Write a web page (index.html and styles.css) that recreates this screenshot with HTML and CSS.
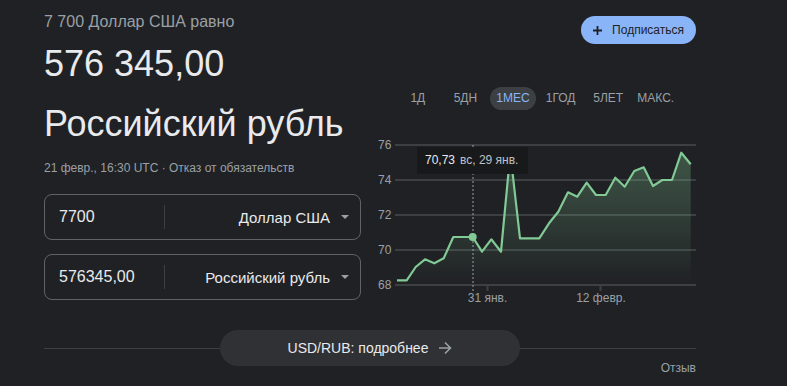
FILE: index.html
```html
<!DOCTYPE html>
<html lang="ru">
<head>
<meta charset="utf-8">
<title>USD to RUB</title>
<link rel="stylesheet" href="styles.css">
</head>
<body>
<div class="page">
  <div class="top">
    <div class="left">
      <div class="eq">7 700 Доллар США равно</div>
      <div class="big">576 345,00</div>
      <div class="big cur">Российский рубль</div>
      <div class="meta">21 февр., 16:30 UTC · <span class="disc">Отказ от обязательств</span></div>
      <div class="field">
        <div class="amount">7700</div>
        <div class="sep"></div>
        <div class="select">Доллар США<span class="caret"></span></div>
      </div>
      <div class="field">
        <div class="amount">576345,00</div>
        <div class="sep"></div>
        <div class="select">Российский рубль<span class="caret"></span></div>
      </div>
    </div>
    <div class="right">
      <div class="subrow">
        <button class="sub"><svg class="plus" width="9" height="9" viewBox="0 0 9 9"><path d="M4.5 0v9M0 4.5h9" stroke="#202124" stroke-width="1.8" fill="none"/></svg>Подписаться</button>
      </div>
      <div class="tabs">
        <span class="tab">1Д</span>
        <span class="tab">5ДН</span>
        <span class="tab on">1МЕС</span>
        <span class="tab">1ГОД</span>
        <span class="tab">5ЛЕТ</span>
        <span class="tab">МАКС.</span>
      </div>
      <div class="chart">
        <svg class="plot" width="326" height="175" viewBox="370 135 326 175">
          <defs>
            <linearGradient id="g" x1="0" y1="150" x2="0" y2="285" gradientUnits="userSpaceOnUse">
              <stop offset="0" stop-color="#81c995" stop-opacity="0.32"/>
              <stop offset="1" stop-color="#81c995" stop-opacity="0"/>
            </linearGradient>
          </defs>
          <g stroke="#3c4043" stroke-width="2">
            <line x1="395" y1="145" x2="696" y2="145"/>
            <line x1="395" y1="180" x2="696" y2="180"/>
            <line x1="395" y1="215" x2="696" y2="215"/>
            <line x1="395" y1="250" x2="696" y2="250"/>
            <line x1="395" y1="285" x2="696" y2="285"/>
            <line x1="487.5" y1="285" x2="487.5" y2="291"/>
            <line x1="600.5" y1="285" x2="600.5" y2="291"/>
          </g>
          <g class="ylab">
            <text x="378" y="149">76</text>
            <text x="378" y="184">74</text>
            <text x="378" y="219">72</text>
            <text x="378" y="254">70</text>
            <text x="378" y="289">68</text>
          </g>
          <g class="xlab">
            <text x="487.5" y="302">31 янв.</text>
            <text x="601" y="302">12 февр.</text>
          </g>
          <path fill="url(#g)" d="M397 280.3 L406.7 280.3 L415.7 267 L425 259.3 L434.3 263.3 L443.7 258.3 L453.3 237 L463.3 237 L472.7 237 L482 251.7 L491.3 239.3 L501 251.7 L510.3 153 L520 238.3 L530 238.3 L539.3 238.3 L549 223.3 L558.3 211.7 L568 192.3 L577.3 196.7 L586.7 182.7 L596 195 L605.7 195 L615.3 177.7 L624.7 186.7 L634.3 171 L643.7 167.3 L653 186 L662.3 180 L672 180 L681.3 152.7 L690.7 164.3 L690.7 285 L397 285 Z"/>
          <line x1="473" y1="145" x2="473" y2="293" stroke="#9aa0a6" stroke-width="1" stroke-dasharray="2 2"/>
          <polyline fill="none" stroke="#81c995" stroke-width="2.2" stroke-linejoin="round" points="397,280.3 406.7,280.3 415.7,267 425,259.3 434.3,263.3 443.7,258.3 453.3,237 463.3,237 472.7,237 482,251.7 491.3,239.3 501,251.7 510.3,153 520,238.3 530,238.3 539.3,238.3 549,223.3 558.3,211.7 568,192.3 577.3,196.7 586.7,182.7 596,195 605.7,195 615.3,177.7 624.7,186.7 634.3,171 643.7,167.3 653,186 662.3,180 672,180 681.3,152.7 690.7,164.3"/>
          <circle cx="472.7" cy="237" r="4" fill="#81c995"/>
        </svg>
        <div class="tip"><span class="tv">70,73</span><span class="td">вс, 29 янв.</span></div>
      </div>
    </div>
  </div>
  <div class="more-row">
    <div class="rule"></div>
    <button class="more">USD/RUB: подробнее<svg width="14" height="14" viewBox="0 0 14 14"><path d="M1 7h11.5M7 1.5l5.5 5.5-5.5 5.5" stroke="#9aa0a6" stroke-width="1.6" fill="none"/></svg></button>
    <div class="rule"></div>
  </div>
  <div class="feedback">Отзыв</div>
</div>
</body>
</html>
```

FILE: styles.css
```css
body {
  margin: 0;
  background: #202124;
  font-family: "Liberation Sans", Arial, sans-serif;
  color: #e8eaed;
}
.page {
  width: 652px;
  margin-left: 44px;
}
.top {
  display: flex;
  gap: 9px;
}
.left {
  width: 317px;
}
.eq {
  font-size: 16px;
  line-height: 20px;
  color: #9aa0a6;
  padding-top: 12px;
}
.big {
  font-size: 36px;
  line-height: 44px;
  margin-top: 10px;
  color: #e8eaed;
}
.cur {
  margin-top: 16px;
}
.meta {
  font-size: 12px;
  line-height: 16px;
  color: #9aa0a6;
  margin-top: 14px;
}
.field {
  box-sizing: border-box;
  height: 46px;
  border: 1px solid #5f6368;
  border-radius: 8px;
  display: flex;
  align-items: center;
  margin-top: 18px;
  font-size: 16px;
}
.field + .field {
  margin-top: 14px;
}
.amount {
  width: 105px;
  padding-left: 14px;
  color: #e8eaed;
}
.sep {
  width: 1px;
  height: 24px;
  background: #3c4043;
}
.select {
  flex: 1;
  display: flex;
  justify-content: flex-end;
  align-items: center;
  gap: 11px;
  padding-right: 11px;
  font-size: 15px;
  color: #e8eaed;
}
.caret {
  width: 0;
  height: 0;
  border-left: 4px solid transparent;
  border-right: 4px solid transparent;
  border-top: 4px solid #9aa0a6;
}
.right {
  width: 326px;
  padding-top: 16px;
}
.subrow {
  display: flex;
  justify-content: flex-end;
}
.sub {
  height: 28px;
  border: 0;
  border-radius: 14px;
  background: #8ab4f8;
  color: #202124;
  font-family: "Liberation Sans", Arial, sans-serif;
  font-size: 12px;
  padding: 0 12px;
  display: flex;
  align-items: center;
  gap: 10px;
}
.tabs {
  display: grid;
  grid-template-columns: repeat(6, 47.6px);
  margin-top: 43px;
  padding-left: 24px;
}
.tab {
  justify-self: center;
  height: 23px;
  line-height: 23px;
  padding: 0 6px;
  border-radius: 12px;
  font-size: 12px;
  color: #9aa0a6;
}
.tab.on {
  background: #3c4043;
  color: #8ab4f8;
}
.chart {
  position: relative;
  margin-top: 25px;
  height: 175px;
}
.plot {
  display: block;
}
.ylab text {
  font-family: "Liberation Sans", Arial, sans-serif;
  font-size: 12px;
  fill: #9aa0a6;
}
.xlab text {
  font-family: "Liberation Sans", Arial, sans-serif;
  font-size: 12px;
  fill: #9aa0a6;
  text-anchor: middle;
}
.tip {
  position: absolute;
  left: 47px;
  top: 12px;
  width: 111px;
  height: 27px;
  box-sizing: border-box;
  padding-left: 8px;
  background: #18191b;
  font-size: 12px;
  line-height: 27px;
  white-space: nowrap;
}
.tv {
  color: #e8eaed;
  margin-right: 5px;
}
.td {
  color: #bdc1c6;
}
.more-row {
  display: flex;
  align-items: center;
  margin-top: 20px;
}
.rule {
  flex: 1;
  height: 1px;
  background: #3c4043;
}
.more {
  width: 300px;
  height: 36px;
  border: 0;
  border-radius: 18px;
  background: #303134;
  color: #e8eaed;
  font-family: "Liberation Sans", Arial, sans-serif;
  font-size: 14px;
  display: flex;
  justify-content: center;
  align-items: center;
  gap: 10px;
}
.feedback {
  text-align: right;
  font-size: 12px;
  line-height: 14px;
  color: #9aa0a6;
  margin-top: -5px;
}
```
